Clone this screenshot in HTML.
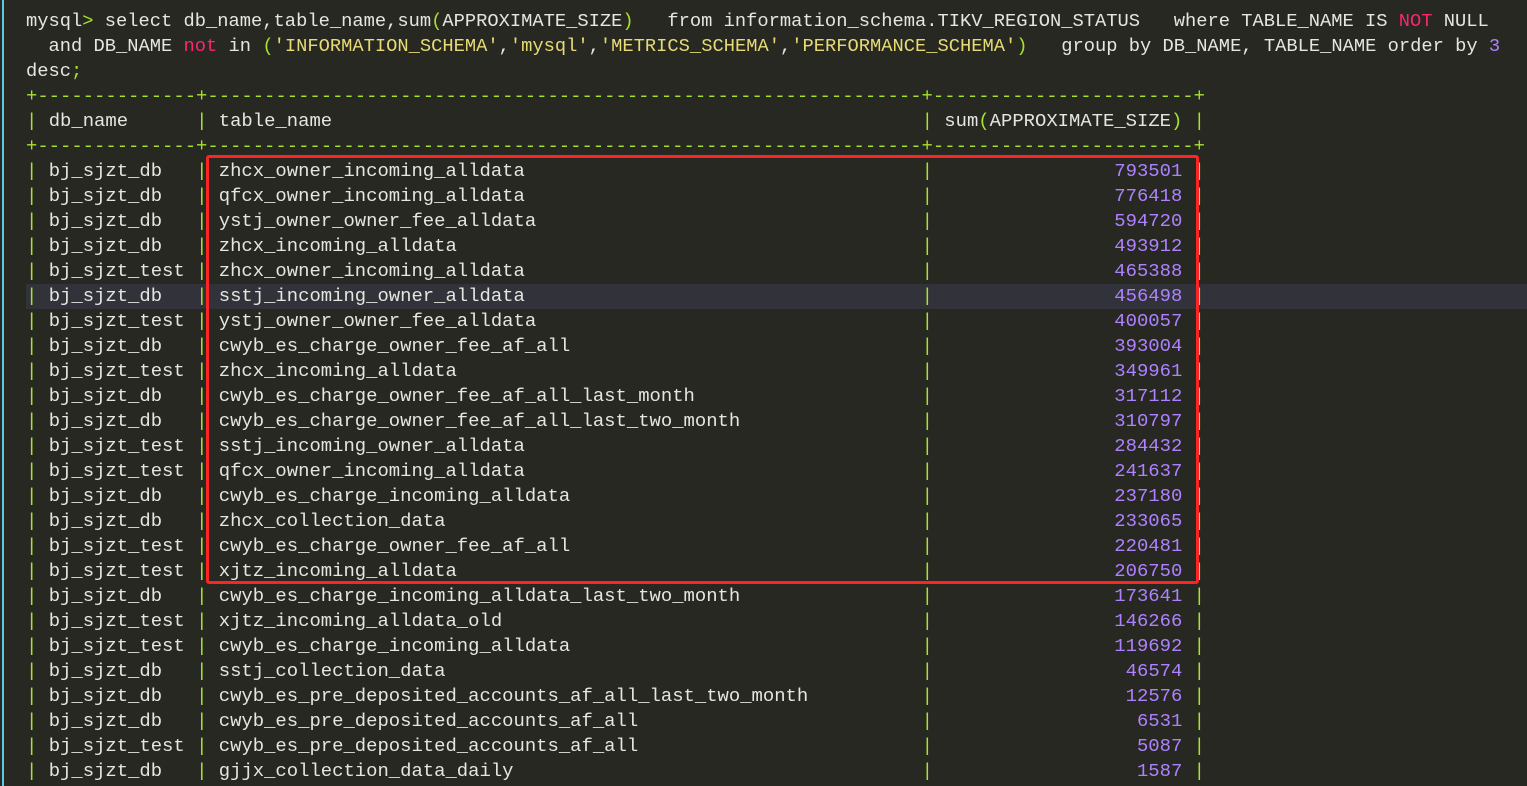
<!DOCTYPE html>
<html><head><meta charset="utf-8"><style>
html,body{margin:0;padding:0;background:#272822;width:1527px;height:786px;overflow:hidden}
#t{position:absolute;left:26px;top:9px;font-family:"Liberation Mono",monospace;font-size:18.9px;line-height:25px;color:#e6e6e0;white-space:normal;width:1600px}
.l{height:25px;white-space:pre}
.s{font-size:18.75px}
.g{color:#a6e22e}.r{color:#f92672}.y{color:#e6db74}.p{color:#ae81ff}
.c1{display:inline-block;width:12ch}.c2{display:inline-block;width:61ch}.c3{display:inline-block;width:21ch;text-align:right;color:#ae81ff}
.hl{background:#31323a}
#bar{position:absolute;left:2px;top:0;width:2px;height:786px;background:#5fc7e6}
#box{position:absolute;left:206px;top:155px;width:987px;height:423px;border:3px solid #ff2424;border-radius:3px}
</style></head><body>
<div id="bar"></div>
<div id="t">
<div class="l s">mysql<span class="g">&gt;</span> select db_name,table_name,sum<span class="g">(</span>APPROXIMATE_SIZE<span class="g">)</span>   from information_schema.TIKV_REGION_STATUS   where TABLE_NAME IS <span class="r">NOT</span> NULL</div>
<div class="l s">  and DB_NAME <span class="r">not</span> in <span class="g">(</span><span class="y">'INFORMATION_SCHEMA'</span>,<span class="y">'mysql'</span>,<span class="y">'METRICS_SCHEMA'</span>,<span class="y">'PERFORMANCE_SCHEMA'</span><span class="g">)</span>   group by DB_NAME, TABLE_NAME order by <span class="p">3</span></div>
<div class="l s">desc<span class="g">;</span></div>
<div class="l g">+--------------+---------------------------------------------------------------+-----------------------+</div>
<div class="l"><span class="g">|</span> <span class="c1">db_name</span> <span class="g">|</span> <span class="c2">table_name</span> <span class="g">|</span> <span class="c1" style="width:21ch">sum<span class="g">(</span>APPROXIMATE_SIZE<span class="g">)</span></span> <span class="g">|</span></div>
<div class="l g">+--------------+---------------------------------------------------------------+-----------------------+</div>
<div class="l"><span class="g">|</span> <span class="c1">bj_sjzt_db</span> <span class="g">|</span> <span class="c2">zhcx_owner_incoming_alldata</span> <span class="g">|</span> <span class="c3">793501</span> <span class="g">|</span></div>
<div class="l"><span class="g">|</span> <span class="c1">bj_sjzt_db</span> <span class="g">|</span> <span class="c2">qfcx_owner_incoming_alldata</span> <span class="g">|</span> <span class="c3">776418</span> <span class="g">|</span></div>
<div class="l"><span class="g">|</span> <span class="c1">bj_sjzt_db</span> <span class="g">|</span> <span class="c2">ystj_owner_owner_fee_alldata</span> <span class="g">|</span> <span class="c3">594720</span> <span class="g">|</span></div>
<div class="l"><span class="g">|</span> <span class="c1">bj_sjzt_db</span> <span class="g">|</span> <span class="c2">zhcx_incoming_alldata</span> <span class="g">|</span> <span class="c3">493912</span> <span class="g">|</span></div>
<div class="l"><span class="g">|</span> <span class="c1">bj_sjzt_test</span> <span class="g">|</span> <span class="c2">zhcx_owner_incoming_alldata</span> <span class="g">|</span> <span class="c3">465388</span> <span class="g">|</span></div>
<div class="l hl"><span class="g">|</span> <span class="c1">bj_sjzt_db</span> <span class="g">|</span> <span class="c2">sstj_incoming_owner_alldata</span> <span class="g">|</span> <span class="c3">456498</span> <span class="g">|</span></div>
<div class="l"><span class="g">|</span> <span class="c1">bj_sjzt_test</span> <span class="g">|</span> <span class="c2">ystj_owner_owner_fee_alldata</span> <span class="g">|</span> <span class="c3">400057</span> <span class="g">|</span></div>
<div class="l"><span class="g">|</span> <span class="c1">bj_sjzt_db</span> <span class="g">|</span> <span class="c2">cwyb_es_charge_owner_fee_af_all</span> <span class="g">|</span> <span class="c3">393004</span> <span class="g">|</span></div>
<div class="l"><span class="g">|</span> <span class="c1">bj_sjzt_test</span> <span class="g">|</span> <span class="c2">zhcx_incoming_alldata</span> <span class="g">|</span> <span class="c3">349961</span> <span class="g">|</span></div>
<div class="l"><span class="g">|</span> <span class="c1">bj_sjzt_db</span> <span class="g">|</span> <span class="c2">cwyb_es_charge_owner_fee_af_all_last_month</span> <span class="g">|</span> <span class="c3">317112</span> <span class="g">|</span></div>
<div class="l"><span class="g">|</span> <span class="c1">bj_sjzt_db</span> <span class="g">|</span> <span class="c2">cwyb_es_charge_owner_fee_af_all_last_two_month</span> <span class="g">|</span> <span class="c3">310797</span> <span class="g">|</span></div>
<div class="l"><span class="g">|</span> <span class="c1">bj_sjzt_test</span> <span class="g">|</span> <span class="c2">sstj_incoming_owner_alldata</span> <span class="g">|</span> <span class="c3">284432</span> <span class="g">|</span></div>
<div class="l"><span class="g">|</span> <span class="c1">bj_sjzt_test</span> <span class="g">|</span> <span class="c2">qfcx_owner_incoming_alldata</span> <span class="g">|</span> <span class="c3">241637</span> <span class="g">|</span></div>
<div class="l"><span class="g">|</span> <span class="c1">bj_sjzt_db</span> <span class="g">|</span> <span class="c2">cwyb_es_charge_incoming_alldata</span> <span class="g">|</span> <span class="c3">237180</span> <span class="g">|</span></div>
<div class="l"><span class="g">|</span> <span class="c1">bj_sjzt_db</span> <span class="g">|</span> <span class="c2">zhcx_collection_data</span> <span class="g">|</span> <span class="c3">233065</span> <span class="g">|</span></div>
<div class="l"><span class="g">|</span> <span class="c1">bj_sjzt_test</span> <span class="g">|</span> <span class="c2">cwyb_es_charge_owner_fee_af_all</span> <span class="g">|</span> <span class="c3">220481</span> <span class="g">|</span></div>
<div class="l"><span class="g">|</span> <span class="c1">bj_sjzt_test</span> <span class="g">|</span> <span class="c2">xjtz_incoming_alldata</span> <span class="g">|</span> <span class="c3">206750</span> <span class="g">|</span></div>
<div class="l"><span class="g">|</span> <span class="c1">bj_sjzt_db</span> <span class="g">|</span> <span class="c2">cwyb_es_charge_incoming_alldata_last_two_month</span> <span class="g">|</span> <span class="c3">173641</span> <span class="g">|</span></div>
<div class="l"><span class="g">|</span> <span class="c1">bj_sjzt_test</span> <span class="g">|</span> <span class="c2">xjtz_incoming_alldata_old</span> <span class="g">|</span> <span class="c3">146266</span> <span class="g">|</span></div>
<div class="l"><span class="g">|</span> <span class="c1">bj_sjzt_test</span> <span class="g">|</span> <span class="c2">cwyb_es_charge_incoming_alldata</span> <span class="g">|</span> <span class="c3">119692</span> <span class="g">|</span></div>
<div class="l"><span class="g">|</span> <span class="c1">bj_sjzt_db</span> <span class="g">|</span> <span class="c2">sstj_collection_data</span> <span class="g">|</span> <span class="c3">46574</span> <span class="g">|</span></div>
<div class="l"><span class="g">|</span> <span class="c1">bj_sjzt_db</span> <span class="g">|</span> <span class="c2">cwyb_es_pre_deposited_accounts_af_all_last_two_month</span> <span class="g">|</span> <span class="c3">12576</span> <span class="g">|</span></div>
<div class="l"><span class="g">|</span> <span class="c1">bj_sjzt_db</span> <span class="g">|</span> <span class="c2">cwyb_es_pre_deposited_accounts_af_all</span> <span class="g">|</span> <span class="c3">6531</span> <span class="g">|</span></div>
<div class="l"><span class="g">|</span> <span class="c1">bj_sjzt_test</span> <span class="g">|</span> <span class="c2">cwyb_es_pre_deposited_accounts_af_all</span> <span class="g">|</span> <span class="c3">5087</span> <span class="g">|</span></div>
<div class="l"><span class="g">|</span> <span class="c1">bj_sjzt_db</span> <span class="g">|</span> <span class="c2">gjjx_collection_data_daily</span> <span class="g">|</span> <span class="c3">1587</span> <span class="g">|</span></div>
</div>
<div id="box"></div>
</body></html>
